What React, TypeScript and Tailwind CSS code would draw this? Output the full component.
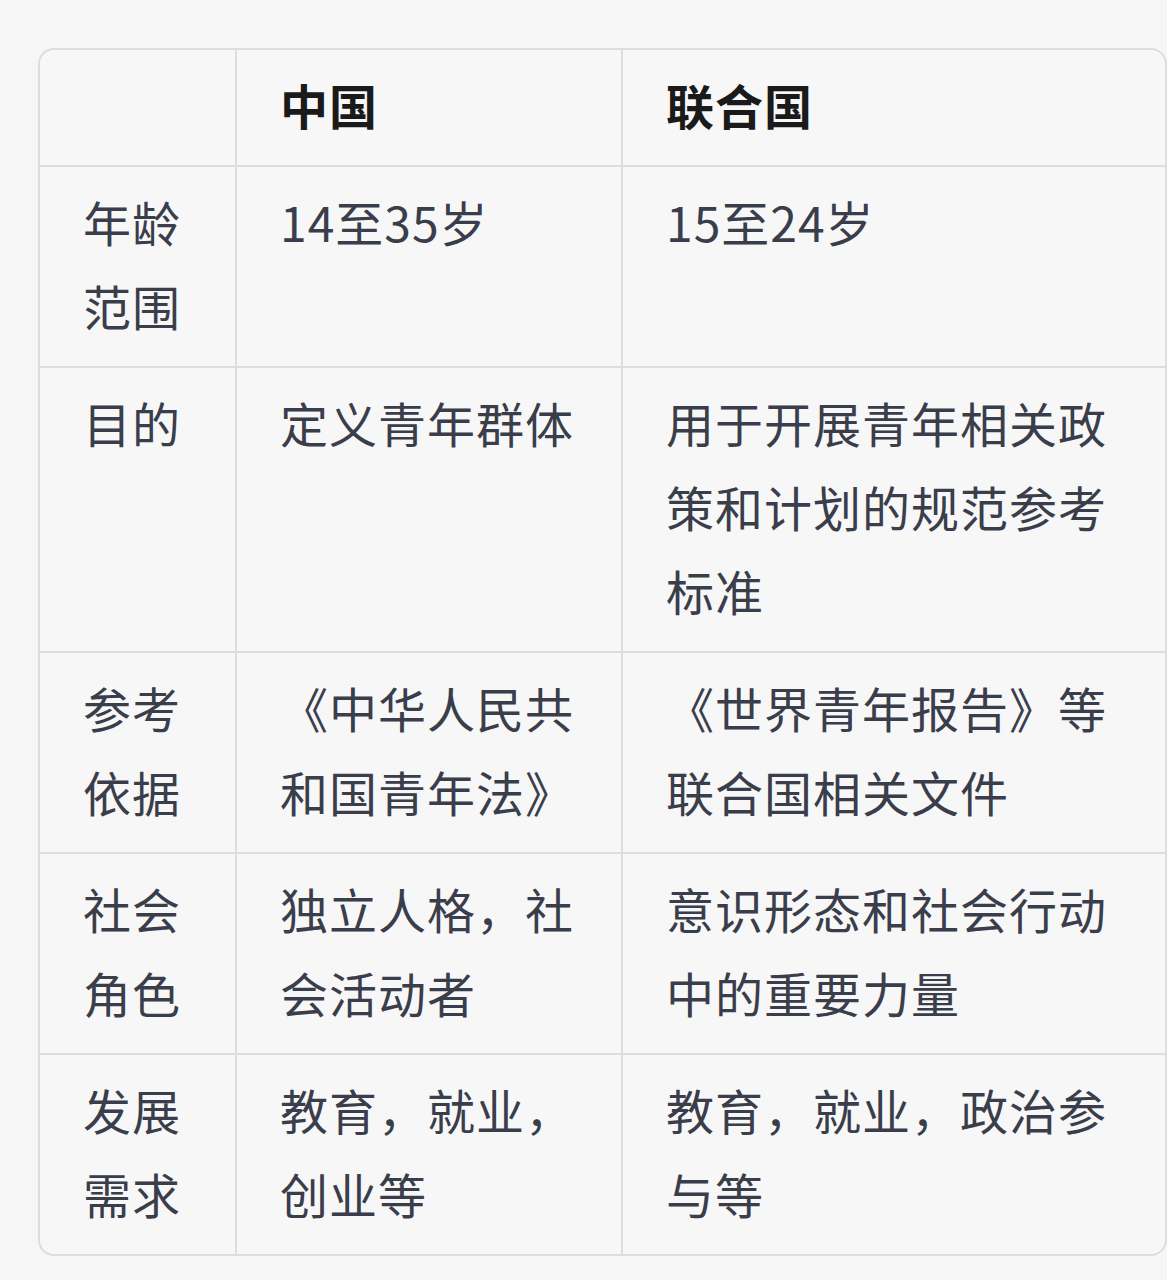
const font = { fontFamily: '"Noto Sans CJK SC", "Noto Sans", sans-serif' };

const rows: { label: string; cn: string; un: string }[] = [
  { label: '年龄范围', cn: '14至35岁', un: '15至24岁' },
  { label: '目的', cn: '定义青年群体', un: '用于开展青年相关政策和计划的规范参考标准' },
  { label: '参考依据', cn: '《中华人民共和国青年法》', un: '《世界青年报告》等联合国相关文件' },
  { label: '社会角色', cn: '独立人格，社会活动者', un: '意识形态和社会行动中的重要力量' },
  { label: '发展需求', cn: '教育，就业，创业等', un: '教育，就业，政治参与等' },
];

const cell = 'align-top pl-[43px] pr-[22px] pt-[12px] pb-[19px] leading-[84px] text-[48px] tracking-[1px]';

export default function App() {
  return (
    <main className="min-h-screen bg-[#f6f6f6] pt-[48px] pl-[38px]" style={font}>
      <div className="w-[1129px] rounded-[16px] border-2 border-[#dcdce2] bg-[#f7f7f8] overflow-hidden">
        <table className="w-full table-fixed border-separate border-spacing-0">
          <colgroup>
            <col className="w-[195px]" />
            <col className="w-[386px]" />
            <col />
          </colgroup>
          <thead>
            <tr className="text-[#1a1a1a] font-medium">
              <th className={`${cell} pb-[18px]`}></th>
              <th className={`${cell} pb-[18px] text-left border-l-2 border-[#dcdce2]`}>中国</th>
              <th className={`${cell} pb-[18px] text-left border-l-2 border-[#dcdce2]`}>联合国</th>
            </tr>
          </thead>
          <tbody className="text-[#3a3d4a]">
            {rows.map((r) => (
              <tr key={r.label}>
                <td className={`${cell} border-t-2 border-[#dcdce2]`}>{r.label}</td>
                <td className={`${cell} border-t-2 border-l-2 border-[#dcdce2]`}>{r.cn}</td>
                <td className={`${cell} border-t-2 border-l-2 border-[#dcdce2]`}>{r.un}</td>
              </tr>
            ))}
          </tbody>
        </table>
      </div>
    </main>
  );
}
